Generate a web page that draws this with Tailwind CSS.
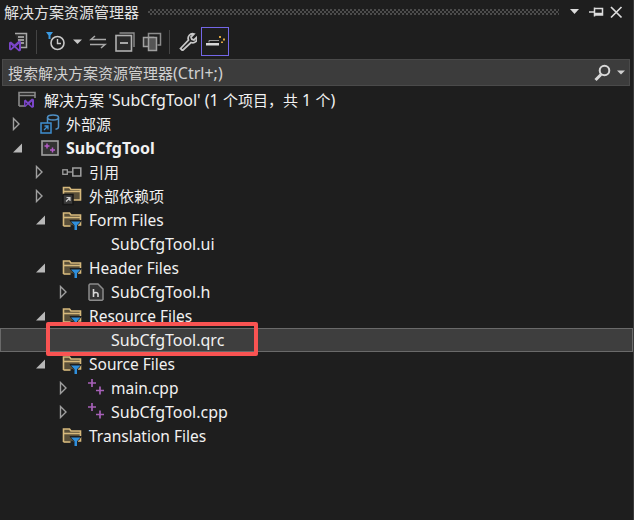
<!DOCTYPE html>
<html lang="zh-CN">
<head>
    <meta charset="UTF-8">
    <title>解决方案资源管理器</title>
    <script src="https://cdn.jsdelivr.net/npm/@tailwindcss/browser@4"></script>
</head>
<body class="bg-[#1e1e1e]">
    <svg width="0" height="0" class="absolute">
        <symbol id="folder" viewBox="0 0 20 20">
            <path d="M1.500 16V3h6l1.500 2h9.500V15h-7" fill="#c9ab6e" fill-opacity=".35" stroke="#d6b97c" stroke-width="1.600"/>
            <path d="M2 7.500h16.500" stroke="#d6b97c" stroke-width="1.600"/>
            <path d="M1.500 16h7" stroke="#d6b97c" stroke-width="1.600"/>
            <path d="M8 10.500h11.500l-4 4.500v5h-3.500v-5z" fill="#1e1e1e" stroke="#1e1e1e" stroke-width="1"/>
            <path d="M9 11.500h9.500l-3.500 3.800V20h-2.500v-4.700z" fill="#2f8fdc"/>
        </symbol>
        <symbol id="cpp" viewBox="0 0 20 20">
            <path d="M6 1v8M2 5h8M14 8.500v8M10 12.500h8" stroke="#a660b8" stroke-width="1.700" fill="none"/>
        </symbol>
        <symbol id="open" viewBox="0 0 12 14">
            <path d="M3.500 1.500l5.500 5.500-5.500 5.500z" fill="none" stroke="#a0a0a0" stroke-width="1.400"/>
        </symbol>
        <symbol id="expanded" viewBox="0 0 12 14">
            <path d="M12 2.500v9H3z" fill="#b8b8b8"/>
        </symbol>
    </svg>

    <div class="relative h-[520px] w-[634px] overflow-hidden border-r border-[#3a3a3a] text-[16px] text-[#f1f1f1] font-['Noto_Sans','Noto_Sans_CJK_SC',sans-serif]">
        <!-- Title -->
        <div class="flex h-[24px] items-center pl-[4px] pr-[10px]">
            <span class="text-[15px] leading-[22px] text-[#e4e4e4]">解决方案资源管理器</span>
            <div class="ml-[9px] h-[6px] flex-1 bg-[conic-gradient(#4c4c4c_25%,transparent_0_50%,#4c4c4c_0_75%,transparent_0)] bg-[length:4px_4px]"></div>
            <svg class="ml-[10px]" width="54" height="16" viewBox="0 0 54 16">
                <path d="M1 5h9L5.500 10z" fill="#dcdcdc"/>
                <path d="M20 8h5M25.500 3.500v9M25.500 4.500h8v6.500h-8M26 9.500h7" stroke="#dcdcdc" stroke-width="1.500" fill="none"/>
                <path d="M42 3l10.500 10.500M52.500 3L42 13.500" stroke="#dcdcdc" stroke-width="1.700" fill="none"/>
            </svg>
        </div>

        <!-- Toolbar -->
        <div class="flex h-[35px] items-center pl-[8px]">
            <svg width="20" height="20" viewBox="0 0 20 20">
                <path d="M7 1.500h11.500v14H12" fill="#2c2c2c" stroke="#a8a8a8" stroke-width="1.500"/>
                <path d="M10 5h6M10 8h6M10 11h6" stroke="#bcbcbc" stroke-width="1.500"/>
                <path d="M1 10.500l2-1 3.500 3 4.500-4 2 1v9l-2 1-4.500-4-3.500 3-2-1zM2.800 12.500v4l2-2zM11 11.800l-3 2.700 3 2.700z" fill="#7a45c8" fill-rule="evenodd"/>
            </svg>
            <div class="ml-[8px] h-[24px] w-px bg-[#444]"></div>
            <svg class="ml-[9px]" width="20" height="20" viewBox="0 0 20 20">
                <circle cx="11.500" cy="11" r="6.500" fill="none" stroke="#c8c8c8" stroke-width="1.600"/>
                <path d="M11.500 7v4.500H15" fill="none" stroke="#c8c8c8" stroke-width="1.400"/>
                <path d="M0 0h7L4.500 3.500V7h-2V3.500z" fill="#3b9ae1"/>
            </svg>
            <svg class="ml-[7px]" width="9" height="6" viewBox="0 0 9 6"><path d="M0 .5h9L4.500 5z" fill="#c8c8c8"/></svg>
            <svg class="ml-[7px]" width="18" height="14" viewBox="0 0 18 14">
                <path d="M6 1L2 4.500h15M12 13l4-3.500H1" fill="none" stroke="#a8a8a8" stroke-width="1.500"/>
            </svg>
            <svg class="ml-[8px]" width="20" height="20" viewBox="0 0 20 20">
                <path d="M4.500 1h14.500v14" fill="none" stroke="#8c8c8c" stroke-width="1.400"/>
                <rect x="1" y="3.500" width="15.500" height="15.500" fill="#2a2a2a" stroke="#b0b0b0" stroke-width="1.600"/>
                <path d="M5 11h8" stroke="#c8c8c8" stroke-width="1.600"/>
            </svg>
            <svg class="ml-[7px]" width="20" height="20" viewBox="0 0 20 20">
                <path d="M6.500 5V1.500h12V13h-3" fill="none" stroke="#8c8c8c" stroke-width="1.500"/>
                <rect x="1.500" y="5.500" width="10" height="9" fill="#3a3a3a" stroke="#a0a0a0" stroke-width="1.500"/>
                <rect x="6.500" y="5.500" width="8" height="13" fill="#555" stroke="#a0a0a0" stroke-width="1.500"/>
            </svg>
            <div class="ml-[7px] h-[24px] w-px bg-[#444]"></div>
            <svg class="ml-[8px]" width="19" height="19" viewBox="0 0 19 19">
                <path d="M2.500 16.500l8-8.500a4.500 4.500 0 0 1 5.500-6l-3 3 .8 2.200 2.200.8 3-3a4.500 4.500 0 0 1-6 5.500l-8.500 8z" fill="none" stroke="#c8c8c8" stroke-width="1.800"/>
            </svg>
            <div class="ml-[4px] flex h-[29px] w-[28px] items-center justify-center border border-[#7467e8]">
                <svg width="20" height="14" viewBox="0 0 20 14">
                    <path d="M4 7.500V5.500h10" fill="none" stroke="#9a9a9a" stroke-width="1"/>
                    <path d="M1 8h13v2.500H1z" fill="#d8d8d8"/>
                    <path d="M14 1h2v2h-2zM18 3.500h2v2h-2zM16 6.500h2v1.500h-2z" fill="#d9a441"/>
                </svg>
            </div>
        </div>

        <!-- Search -->
        <div class="mx-[2px] flex h-[27px] w-[628px] items-center border border-[#4a4a4a] bg-[#3c3c3c] pl-[5px] pr-[4px] text-[#d0d0d0]">
            <span class="flex-1"><span class="text-[15px]">搜索解决方案资源管理器</span>(Ctrl+;)</span>
            <svg width="17" height="18" viewBox="0 0 17 18">
                <circle cx="10.500" cy="6.500" r="4.800" fill="none" stroke="#d8d8d8" stroke-width="2"/>
                <path d="M7 10.500l-5.500 5.500" stroke="#d8d8d8" stroke-width="3"/>
            </svg>
            <svg class="ml-[6px]" width="8" height="5" viewBox="0 0 8 5"><path d="M0 .5h8L4 4.500z" fill="#d0d0d0"/></svg>
        </div>

        <!-- Tree -->
        <div class="absolute inset-x-0 top-[88px]">
            <div class="flex h-[24px] items-center pl-[18px]">
                <svg width="20" height="18" viewBox="0 0 20 18">
                    <path d="M1 15V1.500h16V7M1 4.500h16M1 15h6" fill="none" stroke="#8a8a8a" stroke-width="1.600"/>
                    <path d="M6 9.500l1.500-1 2.500 2.500 4-3.500 2 1v7.500l-2 1-4-3.500-2.500 2.500-1.500-1zM7.500 11.200v3l1.500-1.500zM14 10.500l-2.500 2.200 2.500 2.200z" fill="#7a45c8" fill-rule="evenodd"/>
                </svg>
                <span class="ml-[6px]"><span class="text-[15px]">解决方案</span> 'SubCfgTool' (1 <span class="text-[15px]">个项目，共</span> 1 <span class="text-[15px]">个</span>)</span>
            </div>

            <div class="flex h-[24px] items-center pl-[10px]">
                <svg class="w-[12px]" width="12" height="14"><use href="#open"/></svg>
                <div class="ml-[18px] w-[26px]">
                    <svg width="20" height="20" viewBox="0 0 20 20">
                        <ellipse cx="13" cy="3.500" rx="5.500" ry="2.500" fill="none" stroke="#4f8fc4" stroke-width="1.500"/>
                        <path d="M7.500 3.500V9M18.500 3.500V13c0 1-1.500 2-3 2.300" fill="none" stroke="#4f8fc4" stroke-width="1.500"/>
                        <rect x="1" y="9" width="10" height="10" fill="#1e1e1e" stroke="#3f8fd0" stroke-width="1.500"/>
                        <path d="M4 16l3.500-3.500M4.500 12h3.500v3.500" fill="none" stroke="#3f8fd0" stroke-width="1.300"/>
                    </svg>
                </div>
                <span class="text-[15px]">外部源</span>
            </div>

            <div class="flex h-[24px] items-center pl-[10px]">
                <svg class="w-[12px]" width="12" height="14"><use href="#expanded"/></svg>
                <div class="ml-[19px] w-[25px]">
                    <svg width="18" height="16" viewBox="0 0 18 16">
                        <rect x="1" y="1" width="16" height="14" fill="#333" stroke="#a0a0a0" stroke-width="1.600"/>
                        <path d="M6 3.500v5M3.500 6h5M11.500 7.500v5M9 10h5" stroke="#b45cc8" stroke-width="1.500"/>
                    </svg>
                </div>
                <span class="font-bold">SubCfgTool</span>
            </div>

            <div class="flex h-[24px] items-center pl-[33px]">
                <svg class="w-[12px]" width="12" height="14"><use href="#open"/></svg>
                <div class="ml-[17px] w-[27px]">
                    <svg width="20" height="10" viewBox="0 0 20 10">
                        <rect x=".8" y="2.800" width="4.500" height="4.500" fill="none" stroke="#a0a0a0" stroke-width="1.300"/>
                        <path d="M5.500 5H10" stroke="#a0a0a0" stroke-width="1.300"/>
                        <rect x="10.800" y="1" width="8" height="8" fill="none" stroke="#a0a0a0" stroke-width="1.500"/>
                    </svg>
                </div>
                <span class="text-[15px]">引用</span>
            </div>

            <div class="flex h-[24px] items-center pl-[33px]">
                <svg class="w-[12px]" width="12" height="14"><use href="#open"/></svg>
                <div class="ml-[17px] w-[27px]">
                    <svg width="20" height="20" viewBox="0 0 20 20">
                        <path d="M1.500 9V1.500h6l1.500 2h9.500V14H11" fill="#c9ab6e" fill-opacity=".35" stroke="#d6b97c" stroke-width="1.600"/>
                        <path d="M2 5.500h16" stroke="#d6b97c" stroke-width="1.500"/>
                        <rect x="1" y="8.500" width="10" height="10" fill="#3a3a3a" stroke="#161616" stroke-width="1.500"/>
                        <path d="M4 15.500l3.500-3.500M4.500 11.500h3.500V15" fill="none" stroke="#c8c8c8" stroke-width="1.200"/>
                    </svg>
                </div>
                <span class="text-[15px]">外部依赖项</span>
            </div>

            <div class="flex h-[24px] items-center pl-[33px]">
                <svg class="w-[12px]" width="12" height="14"><use href="#expanded"/></svg>
                <div class="ml-[17px] w-[27px]"><svg width="20" height="20"><use href="#folder"/></svg></div>
                <span class="pt-[2px] text-[15.5px]">Form Files</span>
            </div>

            <div class="flex h-[24px] items-center pl-[111px]"><span>SubCfgTool.ui</span></div>

            <div class="flex h-[24px] items-center pl-[33px]">
                <svg class="w-[12px]" width="12" height="14"><use href="#expanded"/></svg>
                <div class="ml-[17px] w-[27px]"><svg width="20" height="20"><use href="#folder"/></svg></div>
                <span class="pt-[2px] text-[15.5px]">Header Files</span>
            </div>

            <div class="flex h-[24px] items-center pl-[57px]">
                <svg class="w-[12px]" width="12" height="14"><use href="#open"/></svg>
                <div class="ml-[19px] w-[23px]">
                    <svg width="16" height="18" viewBox="0 0 16 18">
                        <path d="M2 1h8l5 5v10.500l-1 .8H2l-1-.8V2z" fill="#333" stroke="#8c8c8c" stroke-width="1.500"/>
                        <path d="M5.500 6v8M5.500 10.500c1-1.500 4.500-1.500 4.500.5v3" fill="none" stroke="#d8d8d8" stroke-width="1.600"/>
                    </svg>
                </div>
                <span>SubCfgTool.h</span>
            </div>

            <div class="flex h-[24px] items-center pl-[33px]">
                <svg class="w-[12px]" width="12" height="14"><use href="#expanded"/></svg>
                <div class="ml-[17px] w-[27px]"><svg width="20" height="20"><use href="#folder"/></svg></div>
                <span class="pt-[2px] text-[15.5px]">Resource Files</span>
            </div>

            <div class="flex h-[24px] items-center border border-[#6a6a6a] bg-[#3e3e3e] pl-[110px]"><span>SubCfgTool.qrc</span></div>

            <div class="flex h-[24px] items-center pl-[33px]">
                <svg class="w-[12px]" width="12" height="14"><use href="#expanded"/></svg>
                <div class="ml-[17px] w-[27px]"><svg width="20" height="20"><use href="#folder"/></svg></div>
                <span class="pt-[2px] text-[15.5px]">Source Files</span>
            </div>

            <div class="flex h-[24px] items-center pl-[57px]">
                <svg class="w-[12px]" width="12" height="14"><use href="#open"/></svg>
                <div class="ml-[17px] w-[25px]"><svg width="20" height="20"><use href="#cpp"/></svg></div>
                <span class="pt-[2px] text-[15.5px]">main.cpp</span>
            </div>

            <div class="flex h-[24px] items-center pl-[57px]">
                <svg class="w-[12px]" width="12" height="14"><use href="#open"/></svg>
                <div class="ml-[17px] w-[25px]"><svg width="20" height="20"><use href="#cpp"/></svg></div>
                <span>SubCfgTool.cpp</span>
            </div>

            <div class="flex h-[24px] items-center pl-[62px]">
                <div class="w-[27px]"><svg width="20" height="20"><use href="#folder"/></svg></div>
                <span class="pt-[2px] text-[15.5px]">Translation Files</span>
            </div>
        </div>

        <!-- Red annotation over the selected row -->
        <div class="absolute left-[46px] top-[322px] h-[34px] w-[212px] rounded-[2px] border-[4px] border-[#f95352]"></div>
    </div>
</body>
</html>
